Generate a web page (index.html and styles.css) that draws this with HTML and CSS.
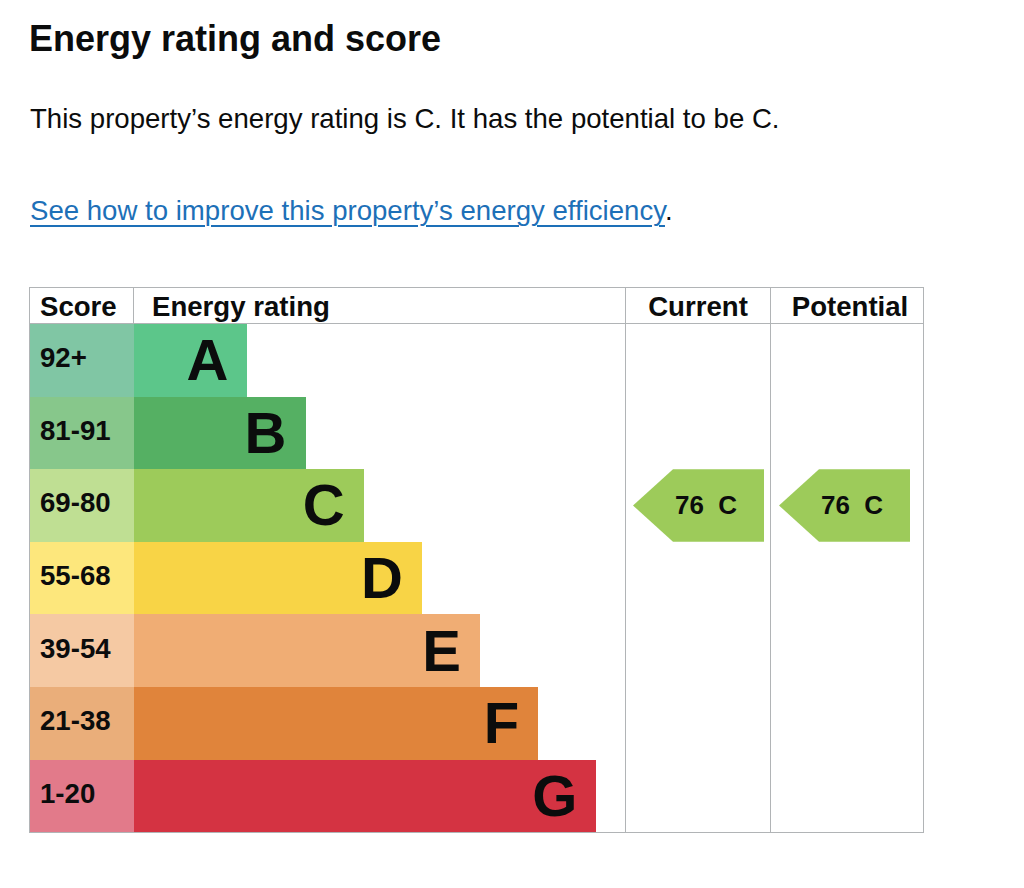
FILE: index.html
```html
<!DOCTYPE html>
<html lang="en">
<head>
<meta charset="utf-8">
<title>Energy rating and score</title>
<link rel="stylesheet" href="styles.css">
</head>
<body>
<main class="page">
  <h1 class="title">Energy rating and score</h1>
  <p class="body-text">This property’s energy rating is C. It has the potential to be C.</p>
  <p class="body-text link-line"><a class="link" href="#">See how to improve this property’s energy efficiency</a>.</p>

  <div class="epc">
    <div class="hd hd-score">Score</div>
    <div class="hd hd-rating">Energy rating</div>
    <div class="hd hd-current">Current</div>
    <div class="hd hd-potential">Potential</div>

    <div class="col col-current">
      <div class="arrow"><span class="arrow-text">76  C</span></div>
    </div>
    <div class="col col-potential">
      <div class="arrow"><span class="arrow-text">76  C</span></div>
    </div>

    <div class="score score-a">92+</div>
    <div class="band"><div class="bar bar-a">A</div></div>
    <div class="score score-b">81-91</div>
    <div class="band"><div class="bar bar-b">B</div></div>
    <div class="score score-c">69-80</div>
    <div class="band"><div class="bar bar-c">C</div></div>
    <div class="score score-d">55-68</div>
    <div class="band"><div class="bar bar-d">D</div></div>
    <div class="score score-e">39-54</div>
    <div class="band"><div class="bar bar-e">E</div></div>
    <div class="score score-f">21-38</div>
    <div class="band"><div class="bar bar-f">F</div></div>
    <div class="score score-g">1-20</div>
    <div class="band"><div class="bar bar-g">G</div></div>
  </div>
</main>
</body>
</html>
```

FILE: styles.css
```css
* { box-sizing: border-box; }

html, body {
  margin: 0;
  padding: 0;
  background: #ffffff;
}

body {
  font-family: "Liberation Sans", Arial, Helvetica, sans-serif;
  color: #0b0c0c;
}

.page {
  padding: 19px 0 0 29px;
}

.title {
  margin: 0;
  font-size: 36px;
  line-height: 40px;
  font-weight: 700;
}

.body-text {
  margin: 42px 0 0 1px;
  font-size: 27.6px;
  line-height: 36px;
}

.link-line {
  margin-top: 56px;
}

.link {
  color: #1d70b8;
  text-decoration: underline;
  text-decoration-thickness: 1.5px;
  text-underline-offset: 5px;
}

.epc {
  margin-top: 58px;
  width: 895px;
  border: 1px solid #b1b4b6;
  display: grid;
  grid-template-columns: 104px 492px 145px 152px;
  grid-template-rows: 36px repeat(7, 72.6px);
  font-weight: 700;
}

.hd {
  font-size: 27.6px;
  line-height: 36px;
  padding-top: 1px;
  border-bottom: 1px solid #b1b4b6;
  white-space: nowrap;
}

.hd-score {
  padding-left: 10px;
  border-right: 1px solid #b1b4b6;
}

.hd-rating {
  padding-left: 18px;
  border-right: 1px solid #b1b4b6;
}

.hd-current {
  text-align: center;
  border-right: 1px solid #b1b4b6;
}

.hd-potential {
  text-align: center;
  padding-left: 6px;
}

.col {
  grid-row: 2 / 9;
  padding-top: 145.2px;
}

.col-current {
  grid-column: 3;
  border-right: 1px solid #b1b4b6;
  padding-left: 7px;
}

.col-potential {
  grid-column: 4;
  padding-left: 8px;
}

.arrow {
  width: 131px;
  height: 72.6px;
  background: #9dcb5a;
  clip-path: polygon(40px 0, 100% 0, 100% 100%, 40px 100%, 0 50%);
  display: flex;
  align-items: center;
  padding-left: 42px;
}

.arrow-text {
  font-size: 26px;
  line-height: 1;
  white-space: pre;
}

.score {
  font-size: 27.6px;
  display: flex;
  align-items: center;
  padding-left: 10px;
  padding-bottom: 4px;
}

.band {
  display: flex;
  border-right: 1px solid #b1b4b6;
}

.bar {
  height: 100%;
  display: flex;
  align-items: center;
  justify-content: flex-end;
  padding-right: 19px;
  font-size: 58px;
  line-height: 1;
}

.score-a { background: #80c6a4; }
.score-b { background: #87c78b; }
.score-c { background: #bfdf93; }
.score-d { background: #fde77c; }
.score-e { background: #f5c9a3; }
.score-f { background: #eaae7a; }
.score-g { background: #e27a8a; }

.bar-a { width: 113.4px; background: #5cc68a; }
.bar-b { width: 171.5px; background: #55b063; }
.bar-c { width: 229.7px; background: #9dcb5a; }
.bar-d { width: 287.8px; background: #f8d446; }
.bar-e { width: 346px;   background: #f0ad74; }
.bar-f { width: 404.1px; background: #e0843b; }
.bar-g { width: 462.3px; background: #d43342; }
```
